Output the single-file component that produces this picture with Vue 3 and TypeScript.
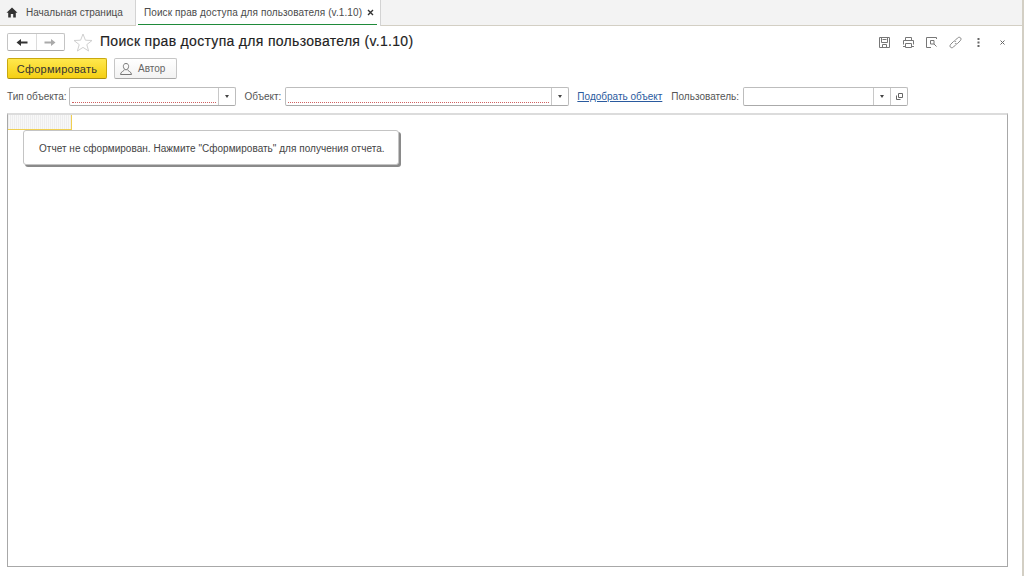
<script setup lang="ts">
const actions = ['save', 'print', 'preview', 'link', 'more', 'close']
</script>

<template>
  <div class="app">
    <div class="tabs">
      <div class="tab home">
        <svg width="12" height="11" viewBox="0 0 12 11"><path d="M6 0.5 L11.5 5.8 H9.8 V10.5 H7.2 V7 H4.8 V10.5 H2.2 V5.8 H0.5 Z" fill="#333" /></svg>
        <span>Начальная страница</span>
      </div>
      <div class="tab active">
        <span>Поиск прав доступа для пользователя (v.1.10)</span>
        <svg class="x" width="7" height="7" viewBox="0 0 7 7"><path d="M1 1 L6 6 M6 1 L1 6" stroke="#333" stroke-width="1.4" /></svg>
      </div>
    </div>
    <div class="form">
      <div class="head">
        <div class="nav">
          <div class="nav-b">
            <svg width="12" height="9" viewBox="0 0 12 9"><path d="M0.5 4.5 L5 1 V3.5 H11.5 V5.5 H5 V8 Z" fill="#333" /></svg>
          </div>
          <div class="nav-b">
            <svg width="12" height="9" viewBox="0 0 12 9"><path d="M11.5 4.5 L7 1 V3.5 H0.5 V5.5 H7 V8 Z" fill="#aaa" /></svg>
          </div>
        </div>
        <svg class="star" width="20" height="19" viewBox="0 0 20 19"><path d="M10 1 L12.4 7.2 L19 7.5 L13.8 11.6 L15.6 18 L10 14.4 L4.4 18 L6.2 11.6 L1 7.5 L7.6 7.2 Z" fill="none" stroke="#d0d0d0" /></svg>
        <h1>Поиск прав доступа для пользователя (v.1.10)</h1>
        <div class="actions">
          <span v-for="a in actions" :key="a" class="act">
            <svg v-if="a === 'save'" width="13" height="13" viewBox="0 0 13 13" fill="none" stroke="#777"><path d="M1.5 1.5 H11.5 V11.5 H1.5 Z M3.5 1.5 V6.5 H9.5 V1.5 M4.5 3.5 H8.5 M4.5 11.5 V8.5 H8.5 V11.5" /></svg>
            <svg v-else-if="a === 'print'" width="13" height="13" viewBox="0 0 13 13" fill="none" stroke="#777"><path d="M3.5 4.5 V1.5 H9.5 V4.5 M1.5 8.5 V4.5 H11.5 V8.5 M1 10.5 H3 M10 10.5 H12 M3.5 7.5 H9.5 V11.5 H3.5 Z" /></svg>
            <svg v-else-if="a === 'preview'" width="13" height="13" viewBox="0 0 13 13" fill="none" stroke="#777"><path d="M11.5 3 V1.5 H1.5 V11.5 H6 M5.5 4.5 H9 V8 H5.5 Z M9 8 L11.5 10.5" /></svg>
            <svg v-else-if="a === 'link'" width="13" height="13" viewBox="0 0 13 13" fill="none" stroke="#888"><path d="M6 4.5 L8.5 2 C9.5 1 11 1 11.7 2 C12.3 3 12 4 11 5 L8.5 7.5 C7.5 8.3 6.5 8 6 7 M7 8.5 L4.5 11 C3.5 12 2 12 1.3 11 C0.7 10 1 9 2 8 L4.5 5.5 C5.5 4.7 6.5 5 7 6" /></svg>
            <svg v-else-if="a === 'more'" width="13" height="13" viewBox="0 0 13 13" fill="#666"><rect x="5.5" y="2" width="2" height="2" /><rect x="5.5" y="5.5" width="2" height="2" /><rect x="5.5" y="9" width="2" height="2" /></svg>
            <svg v-else width="13" height="13" viewBox="0 0 13 13" fill="none" stroke="#666"><path d="M4.5 4.5 L8.5 8.5 M8.5 4.5 L4.5 8.5" /></svg>
          </span>
        </div>
      </div>
      <div class="cmd">
        <button class="btn primary">Сформировать</button>
        <button class="btn plain">
          <svg width="14" height="14" viewBox="0 0 14 14" fill="none" stroke="#777"><path d="M7 1.5 C9 1.5 9.8 3 9.6 4.6 C9.4 6.4 8.4 7.8 7 7.8 C5.6 7.8 4.6 6.4 4.4 4.6 C4.2 3 5 1.5 7 1.5 Z M5.3 7.6 C5.3 9.4 1.5 9.4 1.5 12.5 H12.5 C12.5 9.4 8.7 9.4 8.7 7.6" /></svg>
          Автор
        </button>
      </div>
      <div class="filters">
        <label>Тип объекта:</label>
        <div class="field f1"><div class="value req"></div><div class="drop"><i></i></div></div>
        <label class="l2">Объект:</label>
        <div class="field f2"><div class="value req"></div><div class="drop"><i></i></div></div>
        <a class="link">Подобрать объект</a>
        <label class="l3">Пользователь:</label>
        <div class="field f3">
          <div class="value"></div>
          <div class="drop"><i></i></div>
          <div class="drop open">
            <svg width="7" height="8" viewBox="0 0 7 8" fill="none" stroke="#666"><path d="M2.5 0.5 H6.5 V4.5 H2.5 Z M0.5 2.5 V6.5 H4.5" /></svg>
          </div>
        </div>
      </div>
      <div class="report">
        <div class="cell"></div>
        <div class="note">Отчет не сформирован. Нажмите "Сформировать" для получения отчета.</div>
      </div>
    </div>
  </div>
</template>

<style>
html, body { margin: 0; height: 100%; overflow: hidden; background: #fff; }
</style>

<style scoped>
.app {
  width: 1024px;
  height: 576px;
  display: flex;
  flex-direction: column;
  box-sizing: border-box;
  border-right: 2px solid #d3cfc4;
  font-family: "Liberation Sans", Arial, sans-serif;
  font-size: 10px;
  color: #4b4b4b;
  background: #fff;
}
.tabs {
  height: 26px;
  flex: none;
  box-sizing: border-box;
  display: flex;
  background: #f3f3f3;
  border-bottom: 1px solid #d3cfc4;
}
.tab {
  display: flex;
  align-items: center;
  box-sizing: border-box;
  white-space: nowrap;
}
.home {
  width: 136px;
  padding: 0 0 1px 6px;
  gap: 8px;
  border-right: 1px solid #d3d3d3;
}
.active {
  width: 245px;
  height: 26px;
  padding: 0 0 1px 8px;
  background: #fff;
  border-right: 1px solid #d3d3d3;
  letter-spacing: 0.09px;
  position: relative;
}
.active::after {
  content: "";
  position: absolute;
  left: 2px;
  right: 3px;
  bottom: 1px;
  height: 1px;
  background: #1f8a3a;
}
.x { margin-left: 5px; }
.form {
  flex: 1;
  min-height: 0;
  display: flex;
  flex-direction: column;
  padding: 6px 14px 9px 7px;
}
.head {
  height: 20px;
  display: flex;
  align-items: center;
  flex: none;
}
.nav {
  display: flex;
  width: 58px;
  height: 18px;
  box-sizing: border-box;
  border: 1px solid #c4c4c4;
  border-bottom-color: #aaa;
  border-radius: 2px;
}
.nav-b {
  flex: 1;
  display: flex;
  align-items: center;
  justify-content: center;
}
.nav-b + .nav-b { border-left: 1px solid #dcdcdc; }
.star { margin-left: 8px; }
h1 {
  margin: -2px 0 0 7px;
  font-size: 14px;
  font-weight: 400;
  color: #222;
  letter-spacing: 0.31px;
  -webkit-text-stroke: 0.15px #222;
}
.actions {
  margin-left: auto;
  margin-right: -1px;
  display: flex;
  gap: 10.6px;
}
.act {
  width: 13px;
  height: 13px;
  display: block;
}
.act svg { display: block; }
.cmd {
  margin-top: 6px;
  display: flex;
  gap: 7px;
  flex: none;
}
.btn {
  height: 21px;
  box-sizing: border-box;
  font: inherit;
  color: #4b4b4b;
  padding: 0;
  border-radius: 2px;
  display: flex;
  align-items: center;
  justify-content: center;
}
.primary {
  width: 100px;
  background: linear-gradient(#ffe84d, #f5cf14);
  border: 1px solid #c9a90f;
  border-bottom-color: #a98e10;
  color: #333;
  font-size: 11px;
  letter-spacing: 0.25px;
}
.plain {
  width: 63px;
  gap: 5px;
  justify-content: flex-start;
  padding-left: 4px;
  color: #666;
  background: linear-gradient(#fff, #f2f2f2);
  border: 1px solid #c6c6c6;
  border-bottom-color: #a8a8a8;
}
.filters {
  margin-top: 8px;
  height: 19px;
  display: flex;
  align-items: center;
  flex: none;
}
label { white-space: nowrap; color: #555; }
.field {
  height: 19px;
  box-sizing: border-box;
  display: flex;
  border: 1px solid #bdbdbd;
  border-bottom-color: #aaa;
  border-radius: 2px;
  background: #fff;
}
.f1 { width: 167px; margin-left: 2px; }
.l2 { margin-left: 9px; }
.f2 { width: 284px; margin-left: 4px; }
.link {
  margin-left: 8px;
  color: #2a5a9e;
  text-decoration: underline;
  white-space: nowrap;
}
.l3 { margin-left: 9px; }
.f3 { width: 165px; margin-left: 4px; }
.value {
  flex: 1;
  position: relative;
}
.req::after {
  content: "";
  position: absolute;
  left: 2px;
  right: 2px;
  bottom: 2px;
  border-bottom: 1px dotted #d06060;
}
.drop {
  width: 16px;
  flex: none;
  border-left: 1px solid #c8c8c8;
  display: flex;
  align-items: center;
  justify-content: center;
}
.drop i {
  width: 0;
  height: 0;
  border: 2px solid transparent;
  border-top: 3px solid #444;
  border-bottom: 0;
}
.report {
  margin-top: 7px;
  flex: 1;
  min-height: 0;
  position: relative;
  border: 1px solid #a8a8a8;
  border-top: 2px solid #dcdcdc;
  background: #fff;
}
.cell {
  width: 63px;
  height: 14px;
  background: repeating-linear-gradient(90deg, #eeeeee 0 1px, #f8f8f8 1px 2px);
  border-right: 1px solid #f0cf50;
  border-bottom: 1px solid #f0cf50;
}
.note {
  position: absolute;
  left: 15px;
  top: 15px;
  width: 376px;
  height: 35px;
  box-sizing: border-box;
  display: flex;
  align-items: center;
  padding: 2px 0 0 15px;
  background: #fff;
  border: 1px solid #c4c4c4;
  border-radius: 3px;
  box-shadow: 2px 2px 0 #8a8a8a;
  color: #444;
  letter-spacing: 0.03px;
  white-space: nowrap;
}
</style>
